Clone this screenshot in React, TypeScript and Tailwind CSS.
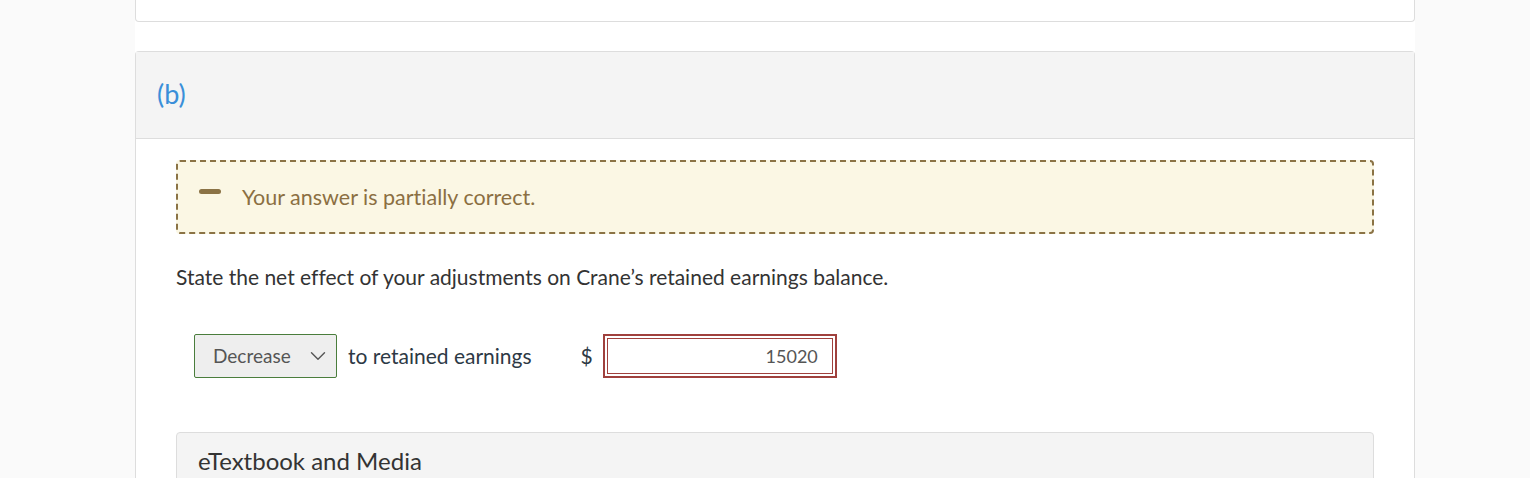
import { ChevronDown } from 'lucide-react';

export default function App() {
  return (
    <div className="h-[478px] bg-[#fafafa] font-['Lato',sans-serif] overflow-hidden [font-variant-ligatures:none]">
      <div className="ml-[135px] w-[1280px] bg-white min-h-[478px] flex flex-col">
        {/* previous part, cut off at top */}
        <div className="shrink-0 h-[22px] border-x border-b border-[#dddddd] rounded-b-[4px] bg-white"></div>

        <div className="shrink-0 h-[29px]"></div>

        {/* part (b) */}
        <div className="flex-1 shrink-0 border-x border-t border-[#dddddd] rounded-t-[4px]">
          <div className="h-[87px] bg-[#f4f4f4] border-b border-[#dddddd] flex items-center px-[21px]">
            <span className="text-[27px] text-[#3a8fd9] leading-none -mt-[3px]">(b)</span>
          </div>

          <div className="px-[40px] pt-[21px]">
            <div className="h-[74px] border-2 border-dashed border-[#8b7345] rounded-[4px] bg-[#fbf7e4] flex items-center pl-[21px] gap-[21px]">
              <span className="w-[22px] h-[5px] rounded-full bg-[#8b7345] -mt-[12px]"></span>
              <span className="text-[21.5px] text-[#8b6f42]">Your answer is partially correct.</span>
            </div>

            <p className="mt-[31px] text-[21px] text-[#333333] leading-[24px]">
              State the net effect of your adjustments on Crane’s retained earnings balance.
            </p>

            <div className="mt-[45px] ml-[18px] flex items-center">
              <div className="w-[143px] h-[44px] bg-[#eeeeee] border border-[#4a7d3c] rounded-[2px] flex items-center justify-between pl-[18px] pr-[5px]">
                <span className="text-[19px] text-[#555555]">Decrease</span>
                <ChevronDown size={26} strokeWidth={1.3} className="text-[#555555]" />
              </div>
              <span className="ml-[11px] text-[21px] text-[#2d3945]">to retained earnings</span>
              <span className="ml-[49px] text-[21px] text-[#2d3945]">$</span>
              <div className="ml-[10px] w-[234px] h-[44px] border-2 border-[#a0403d] p-[2px]">
                <div className="h-full border border-[#a0403d] flex items-center justify-end pr-[14px]">
                  <span className="text-[18px] text-[#555555]">15020</span>
                </div>
              </div>
            </div>

            <div className="mt-[54px] h-[60px] bg-[#f4f4f4] border border-[#dddddd] rounded-t-[4px] pl-[21px] pt-[10px]">
              <span className="text-[24px] text-[#333333]">eTextbook and Media</span>
            </div>
          </div>
        </div>
      </div>
    </div>
  );
}
